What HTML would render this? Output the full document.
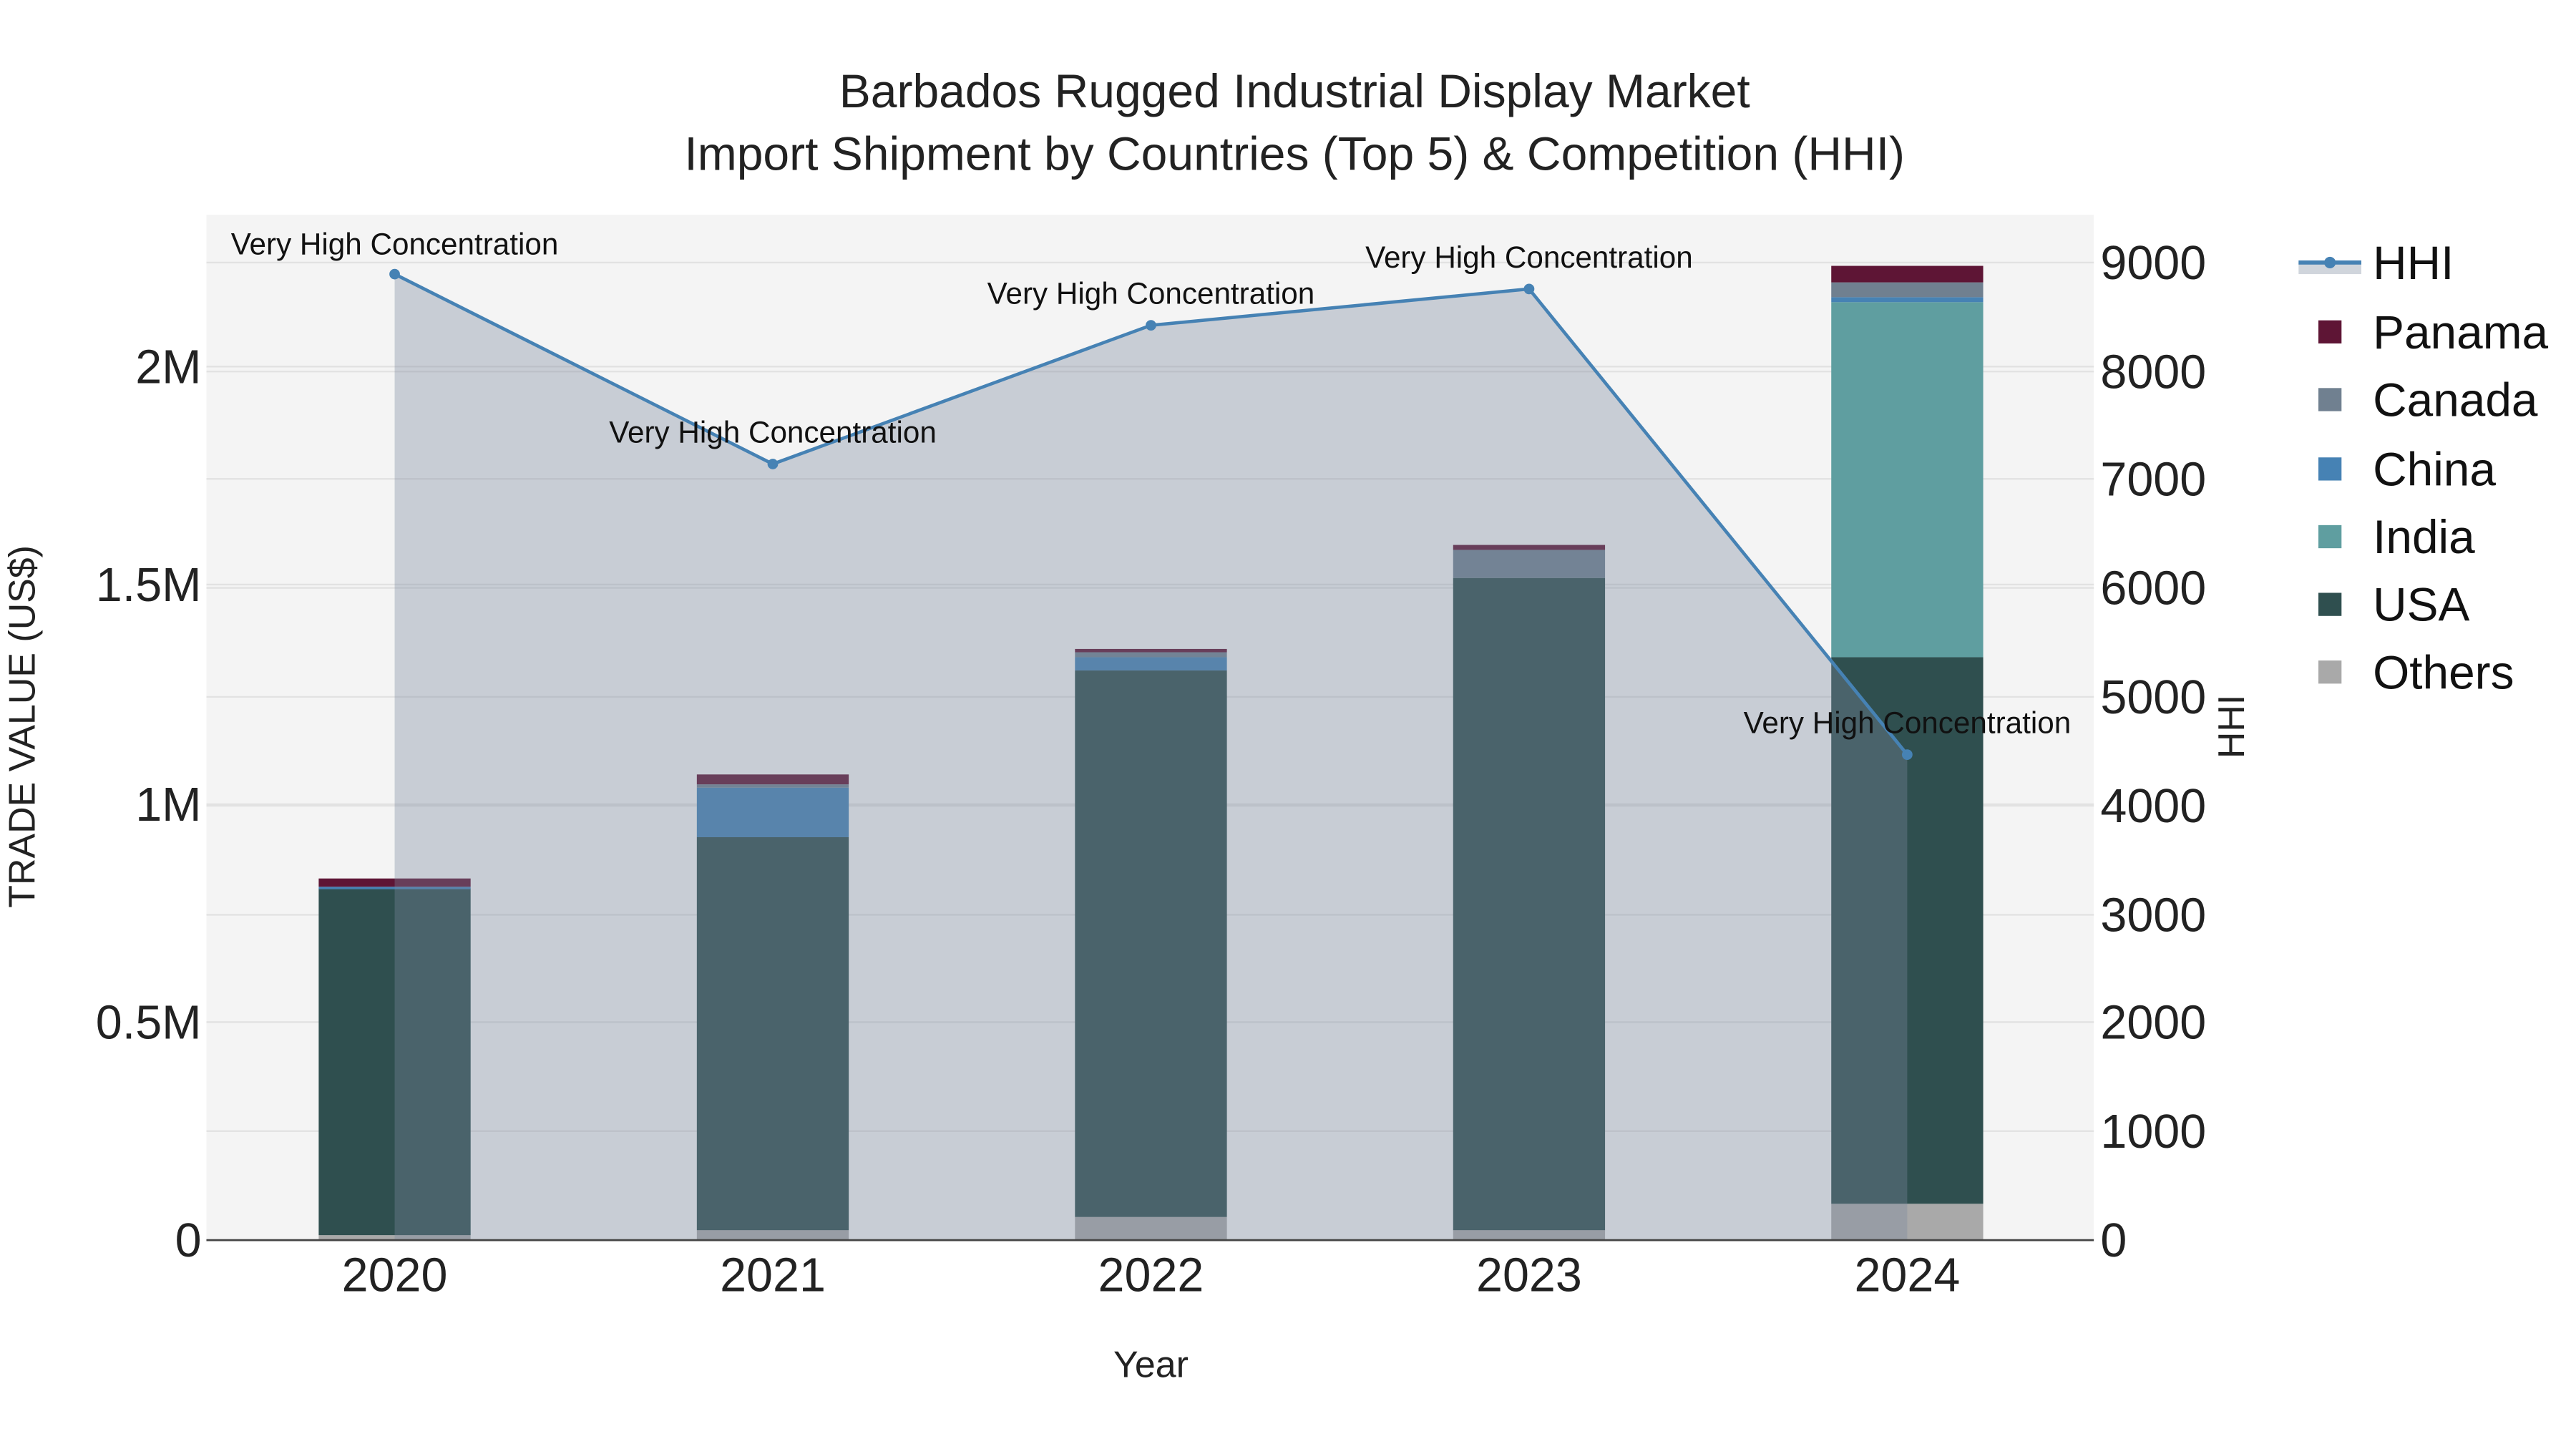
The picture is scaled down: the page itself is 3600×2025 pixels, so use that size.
<!DOCTYPE html>
<html><head><meta charset="utf-8"><style>html,body{margin:0;padding:0;background:#fff}svg{display:block}</style></head><body>
<svg width="3600" height="2025" viewBox="0 0 1560 877.5" xmlns="http://www.w3.org/2000/svg" font-family="Liberation Sans, sans-serif">
<rect width="1560" height="877.5" fill="#fff"/>
<rect x="125" y="130" width="1143" height="621" fill="#f4f4f4"/>
<g stroke="#e2e2e2" stroke-width="1">
<line x1="125" x2="1268" y1="619" y2="619"/><line x1="125" x2="1268" y1="487" y2="487"/><line x1="125" x2="1268" y1="354" y2="354"/><line x1="125" x2="1268" y1="222" y2="222"/>
<line x1="125" x2="1268" y1="685" y2="685"/><line x1="125" x2="1268" y1="554" y2="554"/><line x1="125" x2="1268" y1="488" y2="488"/><line x1="125" x2="1268" y1="422" y2="422"/><line x1="125" x2="1268" y1="356" y2="356"/><line x1="125" x2="1268" y1="290" y2="290"/><line x1="125" x2="1268" y1="225" y2="225"/><line x1="125" x2="1268" y1="159" y2="159"/>
</g>
<g>
<rect x="193" y="748" width="92" height="3" fill="#a9a9a9"/><rect x="193" y="538" width="92" height="210" fill="#2f4f4f"/><rect x="193" y="537" width="92" height="1.5" fill="#4682b4"/><rect x="193" y="532" width="92" height="5" fill="#5e1535"/>
<rect x="422" y="745" width="92" height="6" fill="#a9a9a9"/><rect x="422" y="507" width="92" height="238" fill="#2f4f4f"/><rect x="422" y="477" width="92" height="30" fill="#4682b4"/><rect x="422" y="475" width="92" height="2" fill="#708090"/><rect x="422" y="469" width="92" height="6" fill="#5e1535"/>
<rect x="651" y="737" width="92" height="14" fill="#a9a9a9"/><rect x="651" y="406" width="92" height="331" fill="#2f4f4f"/><rect x="651" y="398" width="92" height="8" fill="#4682b4"/><rect x="651" y="395" width="92" height="3" fill="#708090"/><rect x="651" y="393" width="92" height="2" fill="#5e1535"/>
<rect x="880" y="745" width="92" height="6" fill="#a9a9a9"/><rect x="880" y="350" width="92" height="395" fill="#2f4f4f"/><rect x="880" y="333" width="92" height="17" fill="#708090"/><rect x="880" y="330" width="92" height="3" fill="#5e1535"/>
<rect x="1109" y="729" width="92" height="22" fill="#a9a9a9"/><rect x="1109" y="398" width="92" height="331" fill="#2f4f4f"/><rect x="1109" y="183" width="92" height="215" fill="#5f9ea0"/><rect x="1109" y="180" width="92" height="3" fill="#4682b4"/><rect x="1109" y="171" width="92" height="9" fill="#708090"/><rect x="1109" y="161" width="92" height="10" fill="#5e1535"/>
</g>
<polygon points="239,751 239,166 468,281 697,197 926,175 1155,457 1155,751" fill="rgb(123,137,159)" fill-opacity="0.36"/>
<line x1="125" x2="1268" y1="751" y2="751" stroke="#444" stroke-width="1.2"/>
<polyline points="239,166 468,281 697,197 926,175 1155,457" fill="none" stroke="#4682b4" stroke-width="2"/>
<g fill="#4682b4"><circle cx="239" cy="166" r="3.2"/><circle cx="468" cy="281" r="3.2"/><circle cx="697" cy="197" r="3.2"/><circle cx="926" cy="175" r="3.2"/><circle cx="1155" cy="457" r="3.2"/></g>
<g font-size="18.3" text-anchor="middle" fill="#111">
<text x="239" y="154">Very High Concentration</text><text x="468" y="268">Very High Concentration</text><text x="697" y="184">Very High Concentration</text><text x="926" y="162">Very High Concentration</text><text x="1155" y="444">Very High Concentration</text>
</g>
<g font-size="28.6" fill="#222" text-anchor="middle">
<text x="784" y="65">Barbados Rugged Industrial Display Market</text>
<text x="784" y="103">Import Shipment by Countries (Top 5) &amp; Competition (HHI)</text>
</g>
<g font-size="28.8" fill="#222" text-anchor="end">
<text x="122" y="761">0</text><text x="122" y="629">0.5M</text><text x="122" y="497">1M</text><text x="122" y="364">1.5M</text><text x="122" y="232">2M</text>
</g>
<g font-size="28.8" fill="#222" text-anchor="start">
<text x="1272" y="761">0</text><text x="1272" y="695">1000</text><text x="1272" y="629">2000</text><text x="1272" y="564">3000</text><text x="1272" y="498">4000</text><text x="1272" y="432">5000</text><text x="1272" y="366">6000</text><text x="1272" y="300">7000</text><text x="1272" y="235">8000</text><text x="1272" y="169">9000</text>
</g>
<g font-size="28.8" fill="#222" text-anchor="middle">
<text x="239" y="782">2020</text><text x="468" y="782">2021</text><text x="697" y="782">2022</text><text x="926" y="782">2023</text><text x="1155" y="782">2024</text>
</g>
<text x="697" y="834" font-size="22.5" fill="#222" text-anchor="middle">Year</text>
<text transform="translate(21,440) rotate(-90)" font-size="22.5" fill="#222" text-anchor="middle">TRADE VALUE (US$)</text>
<text transform="translate(1359,440) rotate(-90)" font-size="22.5" fill="#222" text-anchor="middle">HHI</text>
<rect x="1392" y="159" width="38" height="7" fill="#d0d5dc"/>
<line x1="1392" x2="1430" y1="159" y2="159" stroke="#4682b4" stroke-width="2.5"/><circle cx="1411" cy="159" r="3.5" fill="#4682b4"/>
<g font-size="28.5" fill="#111">
<text x="1437" y="169">HHI</text>
<rect x="1404" y="194" width="14" height="14" fill="#5e1535"/><text x="1437" y="211">Panama</text>
<rect x="1404" y="235" width="14" height="14" fill="#708090"/><text x="1437" y="252">Canada</text>
<rect x="1404" y="277" width="14" height="14" fill="#4682b4"/><text x="1437" y="294">China</text>
<rect x="1404" y="318" width="14" height="14" fill="#5f9ea0"/><text x="1437" y="335">India</text>
<rect x="1404" y="359" width="14" height="14" fill="#2f4f4f"/><text x="1437" y="376">USA</text>
<rect x="1404" y="400" width="14" height="14" fill="#a9a9a9"/><text x="1437" y="417">Others</text>
</g>
</svg>
</body></html>
